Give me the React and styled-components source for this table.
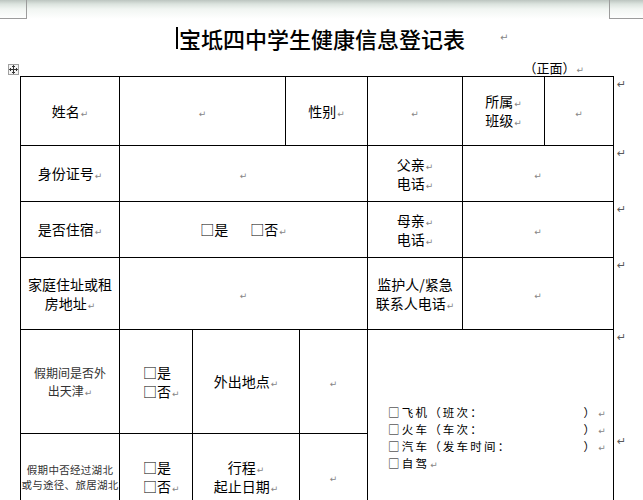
import React from "react";
import styled, { createGlobalStyle } from "styled-components";

const GlobalStyle = createGlobalStyle`
  html, body {
    margin: 0;
    padding: 0;
    background: #fff;
  }
  body {
    font-family: "Noto Sans CJK SC", "Noto Sans", sans-serif;
    overflow: hidden;
  }
`;

const Page = styled.div`
  width: 643px;
  height: 500px;
  overflow: hidden;
  background: #fff;
  color: #000;
`;

const HeaderBar = styled.div`
  height: 19px;
  display: flex;
  justify-content: space-between;
  background: linear-gradient(#bcc5c0 0px, #dbe3de 4px, #f1f5f2 9px, #fff 19px);
`;

const CornerMark = styled.div`
  width: ${(p) => p.$w}px;
  height: 19px;
  box-sizing: border-box;
  border-bottom: 1px solid #9c9c9c;
  ${(p) =>
    p.$side === "left"
      ? "border-right: 1px solid #9c9c9c;"
      : "border-left: 1px solid #9c9c9c;"}
`;

const TitleRow = styled.div`
  display: flex;
  align-items: center;
  height: 28px;
  margin-top: 5px;
  margin-bottom: 3px;
  padding-left: 176px;
`;

const Caret = styled.span`
  display: inline-block;
  width: 2px;
  height: 22px;
  background: #000;
  margin-right: 1px;
`;

const Title = styled.h1`
  margin: 0;
  font-size: 22px;
  font-weight: 500;
  line-height: 28px;
`;

const Mark = styled.span`
  font-family: "DejaVu Sans", sans-serif;
  font-size: ${(p) => p.$size || 9}px;
  line-height: 1;
  color: #858585;
  margin-left: ${(p) => (p.$gap === undefined ? 1 : p.$gap)}px;
`;

const M = (props) => <Mark {...props}>↵</Mark>;

const SubRow = styled.div`
  display: flex;
  align-items: flex-end;
  justify-content: space-between;
  height: 21px;
  box-sizing: border-box;
  padding: 0 59px 0 8px;
`;

const MoveHandle = styled.div`
  width: 11px;
  height: 11px;
  box-sizing: border-box;
  border: 1px solid #a0a0a0;
  background: #f4f4f4;
  margin-bottom: 1px;
  display: flex;
  align-items: center;
  justify-content: center;
`;

const Side = styled.div`
  font-size: 13px;
  line-height: 16px;
`;

const Frame = styled.div`
  display: flex;
  align-items: flex-start;
  margin-left: 20px;
  width: 623px;
`;

const Sheet = styled.table`
  border-collapse: collapse;
  table-layout: fixed;
  width: 593px;
  font-size: 14px;
  line-height: 19px;
  flex: none;
`;

const EndColumn = styled.div`
  display: flex;
  flex-direction: column;
  width: 30px;
  flex: none;
`;

const EndMark = styled.div`
  height: ${(p) => p.$h}px;
  box-sizing: border-box;
  padding: 3px 0 0 3px;
  font-family: "DejaVu Sans", sans-serif;
  font-size: 11px;
  line-height: 11px;
  color: #5a5a5a;
`;

const Row = styled.tr`
  height: ${(p) => p.$h}px;
`;

const Cell = styled.td`
  border: 1px solid #000;
  text-align: center;
  vertical-align: middle;
  padding: ${(p) => (p.$pad === undefined ? "0 4px" : p.$pad)};
  white-space: nowrap;
`;

const SmallLabel = styled.div`
  font-size: ${(p) => p.$size}px;
  line-height: ${(p) => p.$lh}px;
  color: #333;
  letter-spacing: ${(p) => p.$ls || 0}px;
`;

const Choice = styled.span`
  margin-right: ${(p) => p.$gap || 0}px;
`;

const ChoiceStack = styled.div`
  text-align: left;
  padding-left: 13px;
`;

const TravelCell = styled.td`
  border: 1px solid #000;
  vertical-align: top;
  text-align: left;
  padding: 74px 5px 0 20px;
  font-size: 11.5px;
  line-height: 17px;
`;

const TravelLine = styled.div`
  display: flex;
  justify-content: space-between;
  letter-spacing: 2.2px;
  height: 17px;
`;

const rowHeights = [69, 56, 56, 72, 104, 86];

const travel = ["□飞机（班次：", "□火车（车次：", "□汽车（发车时间："];

export default function App() {
  return (
    <Page>
      <GlobalStyle />
      <HeaderBar>
        <CornerMark $side="left" $w={27} />
        <CornerMark $side="right" $w={34} />
      </HeaderBar>
      <TitleRow>
        <Caret />
        <Title>宝坻四中学生健康信息登记表</Title>
        <M $gap={35} $size={10} />
      </TitleRow>
      <SubRow>
        <MoveHandle>
          <svg width="9" height="9" viewBox="0 0 9 9">
            <path
              d="M4.5 0.5V8.5M0.5 4.5H8.5M3 2L4.5 0.5L6 2M3 7L4.5 8.5L6 7M2 3L0.5 4.5L2 6M7 3L8.5 4.5L7 6"
              stroke="#333"
              strokeWidth="1"
              fill="none"
            />
          </svg>
        </MoveHandle>
        <Side>
          （正面）
          <M />
        </Side>
      </SubRow>
      <Frame>
        <Sheet>
          <colgroup>
            <col style={{ width: 99 }} />
            <col style={{ width: 73 }} />
            <col style={{ width: 93 }} />
            <col style={{ width: 14 }} />
            <col style={{ width: 68 }} />
            <col style={{ width: 95 }} />
            <col style={{ width: 82 }} />
            <col style={{ width: 69 }} />
          </colgroup>
          <tbody>
            <Row $h={69}>
              <Cell>
                姓名<M />
              </Cell>
              <Cell colSpan={2}>
                <M $gap={0} />
              </Cell>
              <Cell colSpan={2}>
                性别<M />
              </Cell>
              <Cell>
                <M $gap={0} />
              </Cell>
              <Cell>
                所属<M />
                <br />
                班级<M />
              </Cell>
              <Cell>
                <M $gap={0} />
              </Cell>
            </Row>
            <Row $h={56}>
              <Cell>
                身份证号<M />
              </Cell>
              <Cell colSpan={4}>
                <M $gap={0} />
              </Cell>
              <Cell>
                父亲<M />
                <br />
                电话<M />
              </Cell>
              <Cell colSpan={2}>
                <M $gap={0} />
              </Cell>
            </Row>
            <Row $h={56}>
              <Cell>
                是否住宿<M />
              </Cell>
              <Cell colSpan={4}>
                <Choice $gap={22}>□是</Choice>
                □否<M />
              </Cell>
              <Cell>
                母亲<M />
                <br />
                电话<M />
              </Cell>
              <Cell colSpan={2}>
                <M $gap={0} />
              </Cell>
            </Row>
            <Row $h={72}>
              <Cell>
                家庭住址或租
                <br />
                房地址<M />
              </Cell>
              <Cell colSpan={4}>
                <M $gap={0} />
              </Cell>
              <Cell>
                监护人/紧急
                <br />
                联系人电话<M />
              </Cell>
              <Cell colSpan={2}>
                <M $gap={0} />
              </Cell>
            </Row>
            <Row $h={104}>
              <Cell>
                <SmallLabel $size={12} $lh={18}>
                  假期间是否外
                  <br />
                  出天津<M />
                </SmallLabel>
              </Cell>
              <Cell $pad="0 4px 0 10px">
                <ChoiceStack>
                  □是
                  <br />
                  □否<M />
                </ChoiceStack>
              </Cell>
              <Cell colSpan={2}>
                外出地点<M />
              </Cell>
              <Cell>
                <M $gap={0} />
              </Cell>
              <TravelCell colSpan={3} rowSpan={2}>
                {travel.map((t) => (
                  <TravelLine key={t}>
                    <span>{t}</span>
                    <span>
                      ）<M />
                    </span>
                  </TravelLine>
                ))}
                <TravelLine>
                  <span>
                    □自驾<M />
                  </span>
                </TravelLine>
              </TravelCell>
            </Row>
            <Row $h={86}>
              <Cell $pad="0">
                <SmallLabel $size={10.5} $lh={15} $ls={0.3}>
                  假期中否经过湖北
                  <br />
                  或与途径、旅居湖北
                </SmallLabel>
              </Cell>
              <Cell $pad="0 4px 0 10px">
                <ChoiceStack>
                  □是
                  <br />
                  □否<M />
                </ChoiceStack>
              </Cell>
              <Cell colSpan={2}>
                行程<M />
                <br />
                起止日期<M />
              </Cell>
              <Cell>
                <M $gap={0} />
              </Cell>
            </Row>
          </tbody>
        </Sheet>
        <EndColumn>
          {rowHeights.map((h, i) => (
            <EndMark key={i} $h={h}>
              ↵
            </EndMark>
          ))}
        </EndColumn>
      </Frame>
    </Page>
  );
}
